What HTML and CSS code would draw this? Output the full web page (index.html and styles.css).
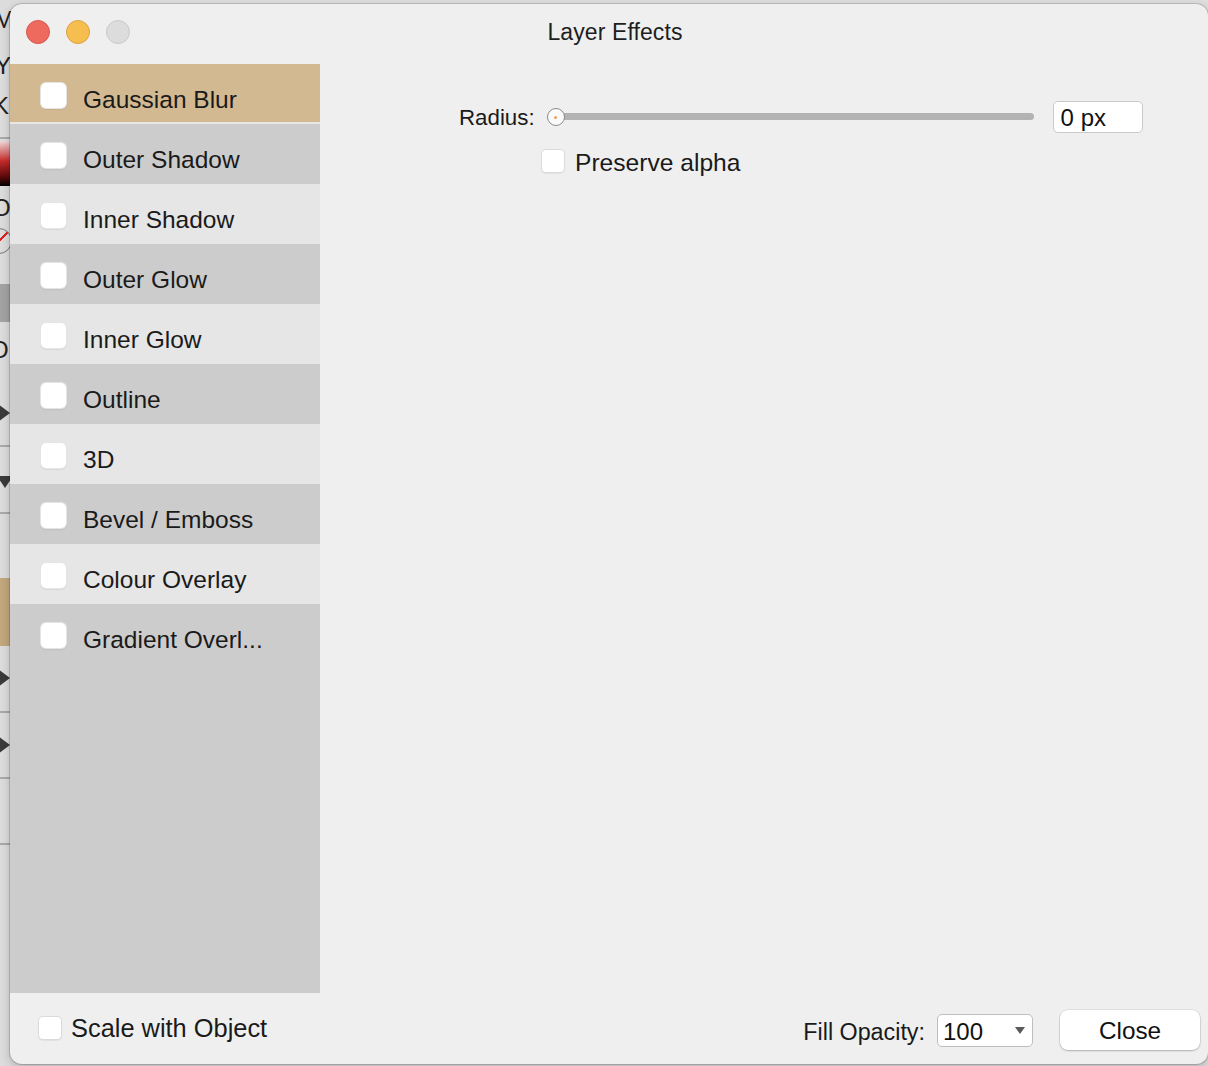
FILE: index.html
```html
<!DOCTYPE html>
<html lang="en">
<head>
<meta charset="utf-8">
<title>Layer Effects</title>
<link rel="stylesheet" href="styles.css">
</head>
<body>
<div class="backdrop">
  <span class="bd-letter bd-m">M</span>
  <span class="bd-letter bd-y">Y</span>
  <span class="bd-letter bd-k">K</span>
  <span class="bd-rule bd-r1"></span>
  <span class="bd-red"></span>
  <span class="bd-letter bd-o">O</span>
  <span class="bd-dial"></span>
  <span class="bd-grey"></span>
  <span class="bd-letter bd-o2">O</span>
  <span class="bd-tri bd-t1"></span>
  <span class="bd-rule bd-r2"></span>
  <span class="bd-down"></span>
  <span class="bd-rule bd-r3"></span>
  <span class="bd-tan"></span>
  <span class="bd-tri bd-t2"></span>
  <span class="bd-rule bd-r4"></span>
  <span class="bd-tri bd-t3"></span>
  <span class="bd-rule bd-r5"></span>
  <span class="bd-rule bd-r6"></span>
</div>

<div class="window">
  <div class="titlebar">
    <div class="lights">
      <span class="light red"></span>
      <span class="light yellow"></span>
      <span class="light grey"></span>
    </div>
    <div class="title">Layer Effects</div>
    <div class="spacer"></div>
  </div>

  <div class="main">
    <ul class="effects">
      <li class="effect selected"><span class="check"></span><span class="label">Gaussian Blur</span></li>
      <li class="effect"><span class="check"></span><span class="label">Outer Shadow</span></li>
      <li class="effect"><span class="check"></span><span class="label">Inner Shadow</span></li>
      <li class="effect"><span class="check"></span><span class="label">Outer Glow</span></li>
      <li class="effect"><span class="check"></span><span class="label">Inner Glow</span></li>
      <li class="effect"><span class="check"></span><span class="label">Outline</span></li>
      <li class="effect"><span class="check"></span><span class="label">3D</span></li>
      <li class="effect"><span class="check"></span><span class="label">Bevel / Emboss</span></li>
      <li class="effect"><span class="check"></span><span class="label">Colour Overlay</span></li>
      <li class="effect"><span class="check"></span><span class="label">Gradient Overl...</span></li>
    </ul>

    <div class="settings">
      <div class="radius-row">
        <span class="field-label radius-label">Radius:</span>
        <div class="slider">
          <div class="track"></div>
          <div class="knob"><span class="dot"></span></div>
        </div>
        <div class="text-input">0 px</div>
      </div>
      <div class="check-row">
        <span class="check small"></span>
        <span class="check-text">Preserve alpha</span>
      </div>
    </div>
  </div>

  <div class="footer">
    <div class="scale">
      <span class="check small"></span>
      <span class="check-text">Scale with Object</span>
    </div>
    <div class="footer-right">
      <span class="field-label">Fill Opacity:</span>
      <div class="select"><span class="select-value">100</span><span class="caret"></span></div>
      <div class="button">Close</div>
    </div>
  </div>
</div>
</body>
</html>
```

FILE: styles.css
```css
* { box-sizing: border-box; }

html, body {
  margin: 0;
  height: 1066px;
  overflow: hidden;
}

body {
  position: relative;
  padding: 4px 0 0 10px;
  background: #dedede;
  font-family: "Liberation Sans", Arial, sans-serif;
  color: #1a1a1a;
}

/* ---------- app behind the dialog ---------- */
.backdrop {
  position: absolute;
  left: 0;
  top: 0;
  width: 40px;
  height: 1066px;
  background: #dcdcdc;
  overflow: hidden;
}
.bd-letter {
  position: absolute;
  left: -4px;
  font-size: 24px;
  line-height: 24px;
  color: #222;
}
.bd-m { top: 8px; left: -6px; }
.bd-y { top: 54px; left: -5px; }
.bd-k { top: 94px; left: -7px; }
.bd-o { top: 196px; left: -8px; }
.bd-o2 { top: 338px; left: -10px; }
.bd-rule {
  position: absolute;
  left: 0;
  width: 40px;
  height: 2px;
  background: #a9a9a9;
}
.bd-r1 { top: 137px; }
.bd-r2 { top: 445px; }
.bd-r3 { top: 512px; }
.bd-r4 { top: 711px; }
.bd-r5 { top: 777px; }
.bd-r6 { top: 843px; }
.bd-red {
  position: absolute;
  left: 0;
  top: 141px;
  width: 40px;
  height: 45px;
  background: linear-gradient(#f0d8d8, #c52a2a 45%, #5a0a0a 80%, #000);
}
.bd-dial {
  position: absolute;
  left: -14px;
  top: 228px;
  width: 26px;
  height: 26px;
  border: 1px solid #777;
  border-radius: 50%;
  background: linear-gradient(135deg, transparent 46%, #e02020 47%, #e02020 53%, transparent 54%);
}
.bd-grey {
  position: absolute;
  left: 0;
  top: 284px;
  width: 40px;
  height: 38px;
  background: #a3a3a3;
}
.bd-tri {
  position: absolute;
  left: -2px;
  width: 0;
  height: 0;
  border-top: 9px solid transparent;
  border-bottom: 9px solid transparent;
  border-left: 12px solid #3a3a3a;
}
.bd-t1 { top: 404px; }
.bd-t2 { top: 669px; }
.bd-t3 { top: 736px; }
.bd-down {
  position: absolute;
  left: -3px;
  top: 476px;
  width: 0;
  height: 0;
  border-left: 8px solid transparent;
  border-right: 8px solid transparent;
  border-top: 12px solid #3a3a3a;
}
.bd-tan {
  position: absolute;
  left: 0;
  top: 578px;
  width: 40px;
  height: 68px;
  background: #c3a77d;
}

/* ---------- dialog window ---------- */
.window {
  position: relative;
  z-index: 1;
  width: 1198px;
  height: 1060px;
  background: #efefef;
  border-radius: 12px;
  overflow: hidden;
  box-shadow: 0 0 0 1px rgba(0, 0, 0, 0.14), 0 3px 10px rgba(0, 0, 0, 0.22);
  display: flex;
  flex-direction: column;
}

.titlebar {
  height: 60px;
  flex: none;
  display: grid;
  grid-template-columns: 1fr auto 1fr;
  align-items: start;
  padding: 16px 4px 0 16px;
}
.lights {
  display: flex;
  gap: 16px;
}
.light {
  width: 24px;
  height: 24px;
  border-radius: 50%;
}
.light.red { background: #ee6a5e; border: 1px solid #d9574c; }
.light.yellow { background: #f5be4f; border: 1px solid #dca343; }
.light.grey { background: #dcdcdc; border: 1px solid #c9c9c9; }
.title {
  font-size: 23px;
  line-height: 24px;
  color: #1e1e1e;
  letter-spacing: 0.1px;
}

.main {
  height: 929px;
  flex: none;
  display: flex;
}

/* ---------- effects list ---------- */
.effects {
  list-style: none;
  margin: 0;
  padding: 0;
  width: 310px;
  flex: none;
  background: #cccccc;
}
.effect {
  height: 60px;
  display: flex;
  align-items: flex-start;
  padding-left: 30px;
}
.effect:nth-child(odd) { background: #e6e6e6; }
.effect.selected {
  background: #d3b991;
  border-bottom: 2px solid #e6e6e6;
}
.check {
  width: 27px;
  height: 27px;
  flex: none;
  background: #ffffff;
  border: 1px solid rgba(0, 0, 0, 0.1);
  border-radius: 6px;
  box-shadow: 0 1px 1px rgba(0, 0, 0, 0.06);
}
.effect .check { margin-top: 18px; }
.effect .label {
  margin: 22px 0 0 16px;
  font-size: 24.5px;
  line-height: 28px;
  white-space: nowrap;
}
.check.small {
  width: 24px;
  height: 24px;
  border-radius: 5px;
  border-color: rgba(0, 0, 0, 0.14);
}

/* ---------- settings ---------- */
.settings {
  flex: 1;
  padding: 37px 0 0 139px;
}
.radius-row {
  display: flex;
  align-items: center;
  height: 32px;
}
.field-label {
  font-size: 22.3px;
  line-height: 26px;
  white-space: nowrap;
}
.radius-label { padding-top: 2px; }
.slider {
  position: relative;
  width: 487px;
  height: 20px;
  margin-left: 12px;
}
.track {
  position: absolute;
  left: 8px;
  right: 0;
  top: 6px;
  height: 7px;
  border-radius: 4px;
  background: #b3b3b3;
}
.knob {
  position: absolute;
  left: 0;
  top: 1px;
  width: 18px;
  height: 18px;
  border-radius: 50%;
  background: #fafafa;
  border: 1.5px solid #8c8c8c;
  display: flex;
  align-items: center;
  justify-content: center;
}
.dot {
  width: 3px;
  height: 3px;
  border-radius: 50%;
  background: #f0a060;
}
.text-input {
  margin-left: 19px;
  width: 90px;
  height: 32px;
  background: #ffffff;
  border: 1px solid #cacaca;
  border-radius: 5px;
  padding: 2px 0 0 7px;
  font-size: 24px;
  line-height: 28px;
  color: #111;
}
.check-row {
  display: flex;
  align-items: center;
  margin: 16px 0 0 82px;
  height: 24px;
}
.check-text {
  margin-left: 10px;
  font-size: 24.6px;
  line-height: 28px;
  white-space: nowrap;
}
.check-row .check-text { padding-top: 3px; }

/* ---------- footer ---------- */
.footer {
  flex: 1;
  display: flex;
  align-items: center;
  padding: 3px 8px 0 28px;
}
.scale {
  display: flex;
  align-items: center;
  margin-bottom: 5px;
}
.scale .check-text {
  margin-left: 9px;
  font-size: 25.4px;
}
.footer-right {
  margin-left: auto;
  display: flex;
  align-items: center;
}
.footer-right .field-label {
  font-size: 23.3px;
  padding-top: 3px;
}
.select {
  margin-left: 12px;
  width: 96px;
  height: 33px;
  background: #ffffff;
  border: 1px solid #bebebe;
  border-radius: 5px;
  display: flex;
  align-items: center;
  padding: 0 6px 0 5px;
}
.select-value {
  font-size: 24px;
  line-height: 28px;
  padding-top: 3px;
  color: #111;
}
.caret {
  margin-left: auto;
  width: 0;
  height: 0;
  border-left: 5px solid transparent;
  border-right: 5px solid transparent;
  border-top: 7px solid #5a5a5a;
  margin-right: 1px;
}
.button {
  margin-left: 27px;
  width: 140px;
  height: 40px;
  background: #ffffff;
  border-radius: 8px;
  box-shadow: 0 0 0 0.5px rgba(0, 0, 0, 0.12), 0 1px 2px rgba(0, 0, 0, 0.22);
  display: flex;
  align-items: center;
  justify-content: center;
  font-size: 24.3px;
  line-height: 28px;
  padding-top: 2px;
  color: #111;
}
```
